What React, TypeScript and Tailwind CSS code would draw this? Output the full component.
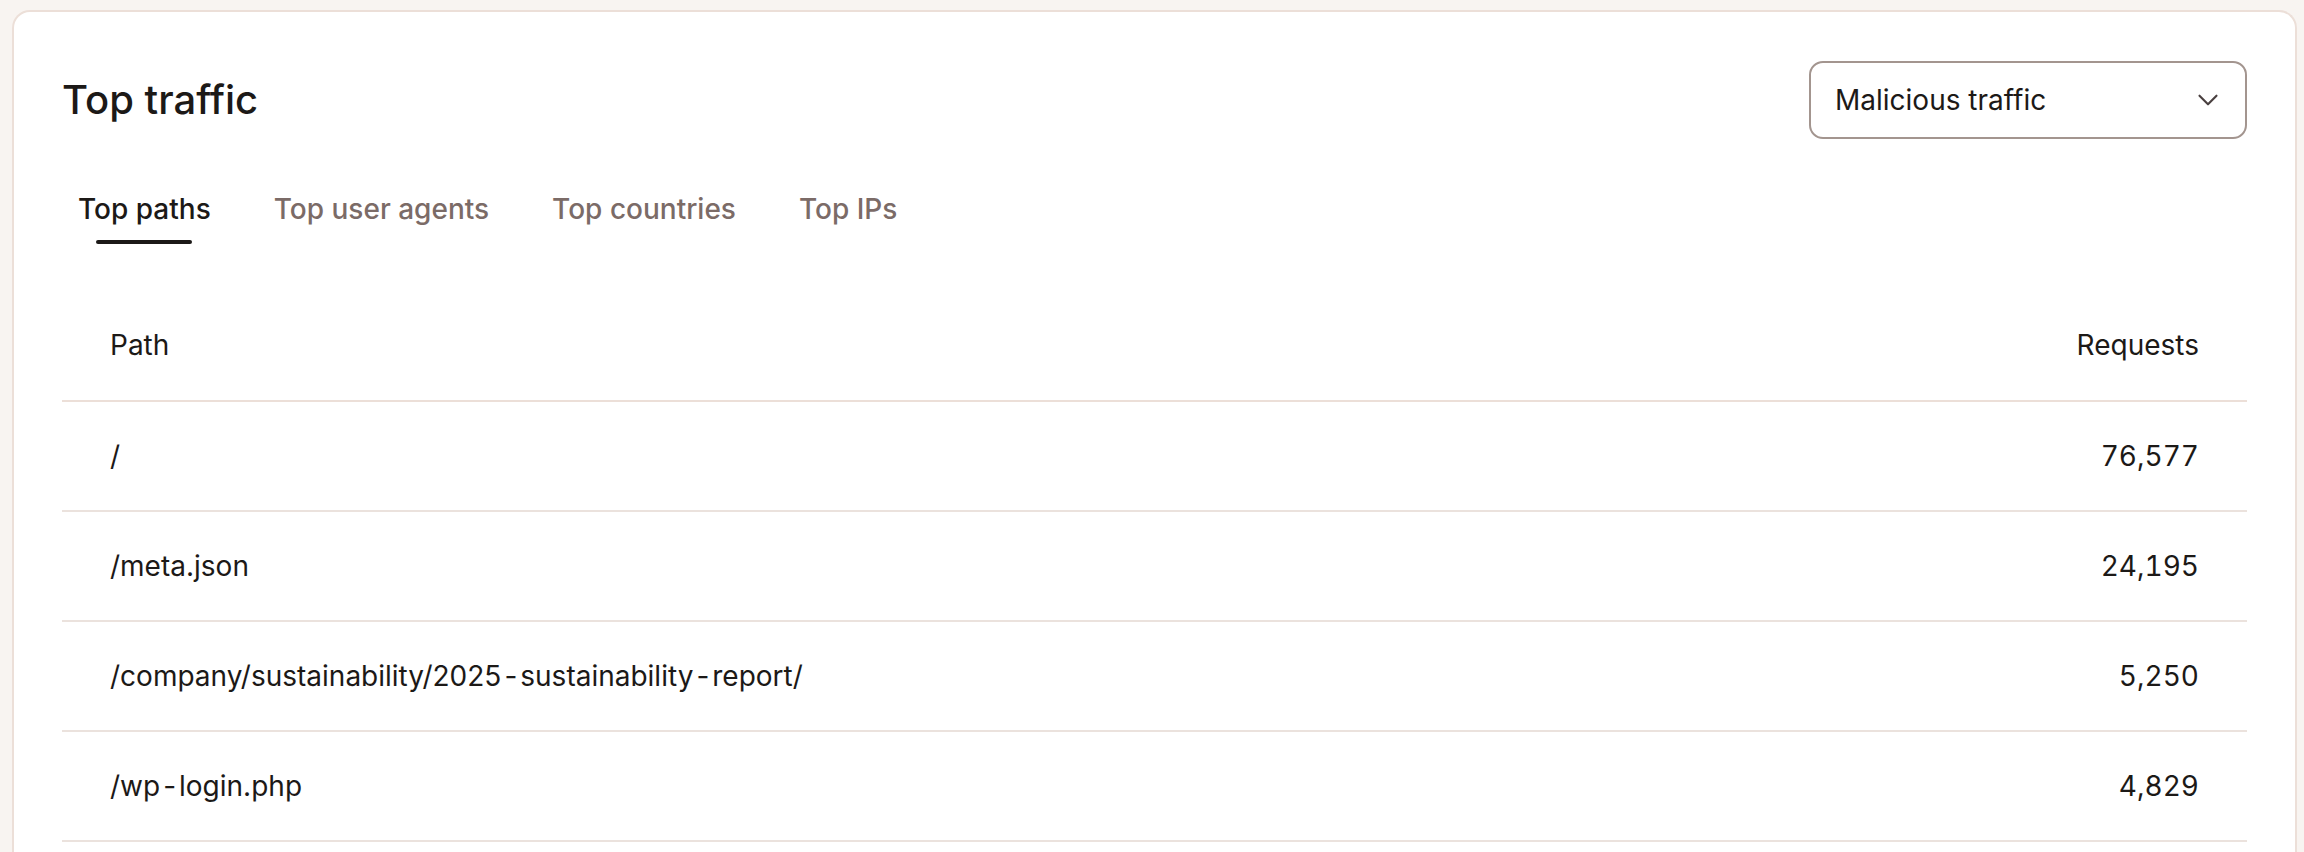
import * as React from "react";
import { ChevronDown } from "lucide-react";

const tabs = ["Top paths", "Top user agents", "Top countries", "Top IPs"];

const rows = [
  { path: "/", requests: "76,577" },
  { path: "/meta.json", requests: "24,195" },
  { path: "/company/sustainability/2025-sustainability-report/", requests: "5,250" },
  { path: "/wp-login.php", requests: "4,829" }
];

// the hyphens in the paths sit with a little air around them
const PathText = ({ path }: { path: string }) => {
  const parts = path.split("-");
  return (
    <span>
      {parts.map((part, i) => (
        <React.Fragment key={i}>
          {i > 0 && <span className="px-[3px]">-</span>}
          {part}
        </React.Fragment>
      ))}
    </span>
  );
};

export default function App() {
  const [active, setActive] = React.useState(0);

  return (
    <div
      className="min-h-[852px] bg-[#f8f4f1] pt-[10px] pl-[12px] pr-[7px]"
      style={{ fontFamily: "Inter, 'Noto Sans', sans-serif" }}
    >
      <div className="min-h-[842px] rounded-t-[18px] border-2 border-b-0 border-[#ecdfd8] bg-white px-[48px] pt-[49px]">
        <div className="flex items-center justify-between">
          <h1 className="text-[40px] font-medium leading-none text-[#1c1917]">Top traffic</h1>
          <button
            type="button"
            className="flex h-[78px] w-[438px] items-center justify-between rounded-[14px] border-2 border-[#a3958f] pl-[24px] pr-[20px] text-[28px] text-[#1c1917]"
          >
            Malicious traffic
            <ChevronDown size={34} strokeWidth={1.5} className="text-[#4a4040]" />
          </button>
        </div>

        <nav className="mt-[52px] flex gap-[31px]">
          {tabs.map((tab, i) => {
            const isActive = i === active;
            return (
              <button
                key={tab}
                type="button"
                onClick={() => setActive(i)}
                className={`flex flex-col px-[16px] text-[28px] font-medium leading-[36px] ${
                  isActive ? "text-[#1c1917]" : "text-[#7b6b67]"
                }`}
              >
                {tab}
                <span
                  className={`mx-auto mt-[13px] h-[4px] w-[96px] rounded-full ${
                    isActive ? "bg-[#1c1917]" : "bg-transparent"
                  }`}
                />
              </button>
            );
          })}
        </nav>

        <div className="mt-[46px] text-[28px] text-[#1c1917]">
          <div className="flex h-[112px] items-center justify-between border-b-2 border-[#ecdfd8] px-[48px]">
            <span>Path</span>
            <span>Requests</span>
          </div>
          {rows.map((row) => (
            <div
              key={row.path}
              className="flex h-[110px] items-center justify-between border-b-2 border-[#ebe2dd] px-[48px]"
            >
              <PathText path={row.path} />
              <span className="tabular-nums">{row.requests}</span>
            </div>
          ))}
        </div>
      </div>
    </div>
  );
}
